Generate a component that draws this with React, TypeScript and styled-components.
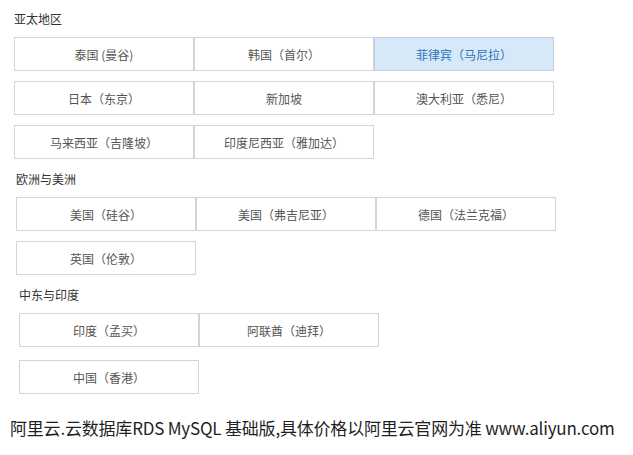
import React from "react";
import styled, { createGlobalStyle } from "styled-components";

interface Region {
	title: string;
	indent: number;
	rowGap: number;
	columns: number;
	items: string[];
	active?: string;
}

const regions: Region[] = [
	{
		title: "亚太地区",
		indent: 14,
		rowGap: 10,
		columns: 3,
		items: [
			"泰国 (曼谷)",
			"韩国（首尔）",
			"菲律宾（马尼拉）",
			"日本（东京）",
			"新加坡",
			"澳大利亚（悉尼）",
			"马来西亚（吉隆坡）",
			"印度尼西亚（雅加达）",
		],
		active: "菲律宾（马尼拉）",
	},
	{
		title: "欧洲与美洲",
		indent: 16,
		rowGap: 10,
		columns: 3,
		items: ["美国（硅谷）", "美国（弗吉尼亚）", "德国（法兰克福）", "英国（伦敦）"],
	},
	{
		title: "中东与印度",
		indent: 19,
		rowGap: 13,
		columns: 2,
		items: ["印度（孟买）", "阿联酋（迪拜）", "中国（香港）"],
	},
];

const App = () => {
	return (
		<Page>
			<GlobalStyle />
			{regions.map((region) => (
				<Section key={region.title} $indent={region.indent}>
					<SectionTitle>{region.title}</SectionTitle>
					<CityGrid $rowGap={region.rowGap} $columns={region.columns}>
						{region.items.map((item) => (
							<CityButton key={item} $active={item === region.active}>
								{item}
							</CityButton>
						))}
					</CityGrid>
				</Section>
			))}
			<Footer>阿里云.云数据库RDS MySQL 基础版,具体价格以阿里云官网为准 www.aliyun.com</Footer>
		</Page>
	);
};

const GlobalStyle = createGlobalStyle`
	html, body {
		margin: 0;
		padding: 0;
		background: #ffffff;
	}
	body {
		font-family: "Noto Sans CJK SC", "Noto Sans", sans-serif;
	}
`;

const Page = styled.div`
	width: 633px;
	height: 455px;
	padding-top: 10px;
	box-sizing: border-box;
	display: flex;
	flex-direction: column;
	gap: 11px;
`;

const Section = styled.section<{ $indent: number }>`
	padding-left: ${(p) => p.$indent}px;
	display: flex;
	flex-direction: column;
	gap: 9px;
`;

const SectionTitle = styled.div`
	font-size: 12px;
	line-height: 18px;
	height: 18px;
	color: #333333;
`;

const CityGrid = styled.div<{ $rowGap: number; $columns: number }>`
	display: grid;
	grid-template-columns: repeat(${(p) => p.$columns}, 180px);
	row-gap: ${(p) => p.$rowGap}px;
`;

const CityButton = styled.div<{ $active?: boolean }>`
	height: 34px;
	box-sizing: border-box;
	border: 1px solid ${(p) => (p.$active ? "#b9d4ea" : "#d4d4d4")};
	background: ${(p) => (p.$active ? "#d7e9f8" : "#ffffff")};
	color: ${(p) => (p.$active ? "#2a73b8" : "#555555")};
	font-size: 12px;
	display: flex;
	align-items: center;
	justify-content: center;
	cursor: pointer;
`;

const Footer = styled.div`
	margin-top: 11px;
	padding-left: 10px;
	font-size: 17px;
	letter-spacing: -0.2px;
	line-height: 24px;
	color: #1f1f1f;
	white-space: nowrap;
`;

export default App;
